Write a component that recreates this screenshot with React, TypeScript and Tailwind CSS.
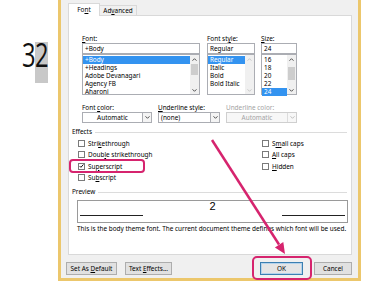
import React from "react";

const PINK = "#d6246e";

function Chev({ up, color = "#3c3c3c" }: { up?: boolean; color?: string }) {
  return (
    <svg width="5" height="3" viewBox="0 0 5 3">
      <path
        d={up ? "M0.5 2.7L2.5 0.7L4.5 2.7" : "M0.5 0.3L2.5 2.3L4.5 0.3"}
        fill="none"
        stroke={color}
        strokeWidth="0.9"
      />
    </svg>
  );
}

function ScrollBar({ pad, thumb, disabled }: { pad?: string; thumb?: string; disabled?: boolean }) {
  const c = disabled ? "#c4c4c4" : "#404040";
  return (
    <div className="flex w-[9px] shrink-0 flex-col bg-[#f0f0f0]">
      <div className="flex h-[8px] items-center justify-center">
        <Chev up color={c} />
      </div>
      <div className="flex flex-1 flex-col px-[1px]">
        {thumb && <div className={pad} />}
        {thumb && <div className={`bg-[#cdcdcd] ${thumb}`} />}
      </div>
      <div className="flex h-[8px] items-center justify-center">
        <Chev color={c} />
      </div>
    </div>
  );
}

function ListBox({
  items,
  selected,
  pad,
  thumb,
  disabled,
}: {
  items: string[];
  selected: number;
  pad?: string;
  thumb?: string;
  disabled?: boolean;
}) {
  return (
    <div className="flex h-[41px] border border-[#abadb3] bg-white">
      <div className="flex-1 pt-[1px]">
        {items.map((it, i) => (
          <div
            key={it}
            className={
              i === selected
                ? "h-[8px] bg-[#3393f0] pl-[2px] leading-[8px] text-white"
                : "h-[8px] pl-[2px] leading-[8px]"
            }
          >
            {it}
          </div>
        ))}
      </div>
      <ScrollBar pad={pad} thumb={thumb} disabled={disabled} />
    </div>
  );
}

function Field({ value }: { value: string }) {
  return (
    <div className="h-[11px] border border-[#abadb3] bg-white pl-[2px] leading-[9px]">{value}</div>
  );
}

function Label({ children }: { children: React.ReactNode }) {
  return <div className="h-[9px] leading-[9px]">{children}</div>;
}

function Dropdown({ value, center, disabled }: { value: string; center?: boolean; disabled?: boolean }) {
  return (
    <div
      className={
        disabled
          ? "flex h-[11px] border border-[#cfcfcf] bg-[#f7f7f7] text-[#a3a3a3]"
          : "flex h-[11px] border border-[#abadb3] bg-white"
      }
    >
      <div className={center ? "flex-1 text-center leading-[9px]" : "flex-1 pl-[2px] leading-[9px]"}>{value}</div>
      <div
        className={
          disabled
            ? "flex w-[9px] items-center justify-center border-l border-[#dcdcdc]"
            : "flex w-[9px] items-center justify-center border-l border-[#abadb3] bg-[#f4f4f4]"
        }
      >
        <Chev color={disabled ? "#b8b8b8" : "#3c3c3c"} />
      </div>
    </div>
  );
}

function Check({ children, checked }: { children: React.ReactNode; checked?: boolean }) {
  return (
    <div className="flex h-[11.25px] items-center">
      <div className="mr-[3px] flex h-[7px] w-[7px] items-center justify-center border border-[#7a7a7a] bg-white">
        {checked && (
          <svg width="6" height="6" viewBox="0 0 6 6">
            <path d="M0.8 3.1L2.3 4.6L5.3 1.2" fill="none" stroke="#111" strokeWidth="1.2" />
          </svg>
        )}
      </div>
      <span className="leading-[9px]">{children}</span>
    </div>
  );
}

function Btn({ children, w, def }: { children: React.ReactNode; w: string; def?: boolean }) {
  return (
    <div
      className={
        def
          ? `flex h-[13px] items-center justify-center border border-[#3c7fb1] bg-[#e5e5e5] shadow-[inset_0_0_0_1px_#b4d3ec] ${w}`
          : `flex h-[13px] items-center justify-center border border-[#adadad] bg-[#e1e1e1] ${w}`
      }
    >
      <span>{children}</span>
    </div>
  );
}

export default function App() {
  return (
    <div className="relative flex h-[281px] w-[375px] overflow-hidden bg-white font-['Noto_Sans',sans-serif] text-[6.4px] text-black">
      <div className="flex w-[58px] shrink-0 items-start pl-[22px] pt-[42px] font-['Open_Sans',sans-serif] text-[33px] font-normal leading-[26px] text-[#111]">
        <div className="w-[13px]">
          <span className="inline-block origin-left scale-x-[0.72]">3</span>
        </div>
        <div className="h-[41px] w-[13px] bg-[#c8c8c8]">
          <span className="inline-block origin-left scale-x-[0.72]">2</span>
        </div>
      </div>

      <div className="flex h-[281px] w-[303px] shrink-0 flex-col border-x-[3px] border-b-[3px] border-[#ecc76c] bg-[#f0f0f0]">
        <div className="flex h-[15px] items-end pl-[7px]">
          <div className="relative z-10 -mb-px flex h-[13px] w-[32px] items-center justify-center border border-b-0 border-[#d9d9d9] bg-white">
            <span>
              Fo<u>n</u>t
            </span>
          </div>
          <div className="flex h-[10px] w-[37px] items-center justify-center border border-b-0 border-l-0 border-[#d9d9d9]">
            <span>
              Ad<u>v</u>anced
            </span>
          </div>
        </div>

        <div className="ml-[7px] mr-[6px] flex h-[240px] flex-col border border-[#d9d9d9] bg-white pt-[18px]">
          <div className="ml-[13px] flex">
            <div className="mr-[7px] w-[118px]">
              <Label>
                <u>F</u>ont:
              </Label>
              <Field value="+Body" />
              <ListBox
                items={["+Body", "+Headings", "Adobe Devanagari", "Agency FB", "Aharoni"]}
                selected={0}
                pad="h-[1px]"
                thumb="h-[11px]"
              />
            </div>
            <div className="mr-[6px] w-[48px]">
              <Label>
                Font st<u>y</u>le:
              </Label>
              <Field value="Regular" />
              <ListBox items={["Regular", "Italic", "Bold", "Bold Italic"]} selected={0} disabled />
            </div>
            <div className="w-[36px]">
              <Label>
                <u>S</u>ize:
              </Label>
              <Field value="24" />
              <ListBox items={["16", "18", "20", "22", "24"]} selected={4} pad="h-[4px]" thumb="h-[13px]" />
            </div>
          </div>

          <div className="ml-[13px] mt-[8px] flex">
            <div className="mr-[6px] w-[70px]">
              <Label>
                Font <u>c</u>olor:
              </Label>
              <Dropdown value="Automatic" center />
            </div>
            <div className="mr-[6px] w-[62px]">
              <Label>
                <u>U</u>nderline style:
              </Label>
              <Dropdown value="(none)" />
            </div>
            <div className="w-[71px]">
              <Label>
                <span className="text-[#a3a3a3]">Underline color:</span>
              </Label>
              <Dropdown value="Automatic" center disabled />
            </div>
          </div>

          <div className="ml-[3px] mr-[4px] mt-[5px] flex h-[8px] items-center">
            <span>Effects</span>
            <div className="ml-[3px] flex-1 border-t border-[#dcdcdc]" />
          </div>

          <div className="ml-[9px] mt-[2px] flex">
            <div className="w-[184px]">
              <Check>
                Stri<u>k</u>ethrough
              </Check>
              <Check>
                Doub<u>l</u>e strikethrough
              </Check>
              <Check checked>
                Su<u>p</u>erscript
              </Check>
              <Check>
                Su<u>b</u>script
              </Check>
            </div>
            <div>
              <Check>
                S<u>m</u>all caps
              </Check>
              <Check>
                <u>A</u>ll caps
              </Check>
              <Check>
                <u>H</u>idden
              </Check>
            </div>
          </div>

          <div className="ml-[3px] mr-[4px] mt-[5px] flex h-[8px] items-center">
            <span>Preview</span>
            <div className="ml-[3px] flex-1 border-t border-[#dcdcdc]" />
          </div>

          <div className="ml-[8px] mt-[4px] flex h-[23px] w-[271px] items-end justify-between border border-[#9a9a9a] px-[2px] pb-[6px]">
            <div className="w-[63px] border-t border-[#222]" />
            <div className="self-start font-['Liberation_Sans',sans-serif] text-[11px] leading-[11px] text-black">2</div>
            <div className="w-[63px] border-t border-[#222]" />
          </div>

          <div className="ml-[8px] mt-[2px] h-[8px] whitespace-nowrap leading-[8px]">
            This is the body theme font. The current document theme defines which font will be used.
          </div>
        </div>

        <div className="mt-[7px] flex pl-[5px] pr-[6px]">
          <Btn w="w-[51px]">
            Set As <u>D</u>efault
          </Btn>
          <div className="ml-[8px]">
            <Btn w="w-[47px]">
              Text <u>E</u>ffects...
            </Btn>
          </div>
          <div className="flex-1" />
          <Btn w="w-[43px]" def>
            OK
          </Btn>
          <div className="ml-[11px]">
            <Btn w="w-[38px]">Cancel</Btn>
          </div>
        </div>
      </div>

      <svg className="pointer-events-none absolute inset-0" width="375" height="281" viewBox="0 0 375 281">
        <rect x="70" y="160" width="74" height="12" rx="3" fill="none" stroke={PINK} strokeWidth="2" />
        <rect x="253" y="257" width="58" height="22" rx="4" fill="none" stroke={PINK} strokeWidth="2" />
        <line x1="212" y1="140" x2="279" y2="244.5" stroke={PINK} strokeWidth="2.5" />
        <polygon points="285,254 274.9,247.4 283.3,242" fill={PINK} />
      </svg>
    </div>
  );
}
